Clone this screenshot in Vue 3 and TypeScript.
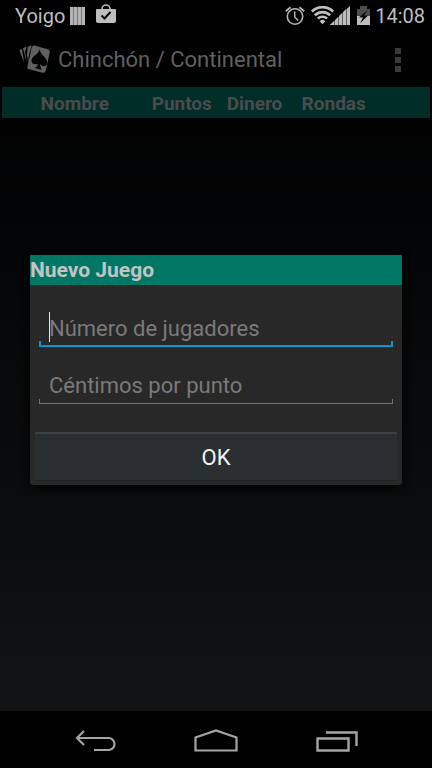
<script setup lang="ts">
import { ref } from 'vue'

const columns: string[] = ['Nombre', 'Puntos', 'Dinero', 'Rondas']
const players = ref('')
const cents = ref('')
</script>

<template>
  <div class="screen">
    <header class="status">
      <span class="carrier">Yoigo</span>
      <svg class="bars" width="16" height="18" viewBox="0 0 16 18" aria-hidden="true">
        <path d="M0 0h15v18H0z" fill="#777" />
        <path d="M0 0h3v18H0zM4 0h3v18H4zM8 0h3v18H8zM12 0h3v18h-3z" fill="#b4b4b4" />
      </svg>
      <svg class="bag" width="20" height="20" viewBox="0 0 20 20" aria-hidden="true">
        <path d="M6 6V4.500a4 3.500 0 0 1 8 0V6" fill="none" stroke="#bbb" stroke-width="1.500" />
        <path d="M1 5h18a1 1 0 0 1 1 1v11a2 2 0 0 1-2 2H2a2 2 0 0 1-2-2V6a1 1 0 0 1 1-1z" fill="#bebebe" />
        <path d="M5.500 11.500l3 3 6-6.500" fill="none" stroke="#080808" stroke-width="2" />
      </svg>
      <span class="spacer"></span>
      <svg class="alarm" width="20" height="20" viewBox="0 0 20 20" fill="none" stroke="#b5b5b5" aria-hidden="true">
        <circle cx="10" cy="10.500" r="7.700" stroke-width="1.600" />
        <path d="M9.700 5.500v5.500l3.500 3.500" stroke-width="1.500" />
        <path d="M.8 5.200L5.500 1.300M14.500 1.300L19.200 5.200" stroke-width="1.800" />
      </svg>
      <svg class="signal" width="40" height="20" viewBox="0 0 40 20" aria-hidden="true">
        <g fill="none" stroke="#c0c0c0" stroke-width="2.700">
          <path d="M.9 5.600a15 15 0 0 1 21.200 0" />
          <path d="M3.900 9.200a10.800 10.800 0 0 1 15.200 0" />
          <path d="M6.900 12.600a6.600 6.600 0 0 1 9.200 0" />
        </g>
        <path d="M8.700 15.200a4 4 0 0 1 5.600 0l-2.800 3z" fill="#c0c0c0" />
        <path d="M19 19L39 0v19z" fill="#626262" />
        <path d="M19 19l4-4v4zM24 14l3-3v8h-3zM28 10l3-3v12h-3zM32 6l3-3v16h-3zM36 3l3-3v19h-3z" fill="#bdbdbd" />
      </svg>
      <svg class="battery" width="13" height="20" viewBox="0 0 13 20" aria-hidden="true">
        <path d="M3 0h7v3h3v7H0V3h3z" fill="#4b4b4b" />
        <path d="M0 10h13v9H0z" fill="#bdbdbd" />
        <path d="M10.500 4L2 11.500h4L3 17.500l8-8H7z" fill="#080808" />
      </svg>
      <time class="clock">14:08</time>
    </header>

    <main class="content">
      <div class="appbar">
        <svg class="logo" width="32" height="30" viewBox="0 0 32 30" aria-hidden="true">
          <path d="M.3 5.200l2.700-1.200L5.200 17.500zM4 3.200l3.600-1.700L6 7l1.900 11.500zM8.800 1.700L12.700.3 9.400 12l.1 6.500-1.500-9z" fill="#606060" />
          <path d="M15.600.6l13 3.700q2.700.8 2.100 3.500l-4 18q-.7 2.600-3.200 1.900L10.200 24.300q-2.400-.7-1.700-3.100L12.700 2.500q.6-2.500 2.900-1.900z" fill="#606060" />
          <path d="M20.600 4.300c.8 5.700 8.700 9 7.500 14.300-.9 3.300-5.100 3.200-6.800.7 0 2.300.6 4.100 1.700 5.600l-7.300-1.900c1.800-.8 2.900-2.400 3.400-4.300-2.500 1.500-6.800.4-6.600-3.200.4-4.700 6.900-5.600 8.100-11.200z" fill="#050505" />
        </svg>
        <h1>Chinchón / Continental</h1>
        <button class="more" type="button" aria-label="Más opciones">
          <span></span><span></span><span></span>
        </button>
      </div>

      <table class="scores">
        <thead>
          <tr>
            <th v-for="name in columns" :key="name" scope="col">{{ name }}</th>
            <td></td>
          </tr>
        </thead>
      </table>

      <div class="overlay">
        <form class="dialog" role="dialog" aria-labelledby="dialog-title" @submit.prevent>
          <h2 id="dialog-title">Nuevo Juego</h2>
          <div class="fields">
            <div class="field active">
              <input v-model="players" type="text" inputmode="numeric" placeholder="Número de jugadores" aria-label="Número de jugadores" />
            </div>
            <div class="field">
              <input v-model="cents" type="text" inputmode="numeric" placeholder="Céntimos por punto" aria-label="Céntimos por punto" />
            </div>
          </div>
          <button class="ok" type="submit">OK</button>
        </form>
      </div>
    </main>

    <nav class="navbar">
      <button type="button" aria-label="Atrás">
        <svg width="42" height="24" viewBox="0 0 42 24" fill="none" stroke="#a5a5a5" stroke-width="2.200">
          <path d="M3 10h31.500a6 6 0 0 1 0 12H20" />
          <path d="M10 3L3 10l7 7" />
        </svg>
      </button>
      <button type="button" aria-label="Inicio">
        <svg width="44" height="24" viewBox="0 0 44 24" fill="none" stroke="#a5a5a5" stroke-width="2.200">
          <path d="M1.500 22.500V9.500L22 2.500l20.500 7v13z" />
        </svg>
      </button>
      <button type="button" aria-label="Recientes">
        <svg width="42" height="24" viewBox="0 0 42 24" fill="none" stroke="#a5a5a5">
          <path d="M1.500 10.500h31v12h-31z" stroke-width="2.400" />
          <path d="M10 4.500h30.500V18" stroke-width="2.400" />
        </svg>
      </button>
    </nav>
  </div>
</template>

<style>
body {
  background: #000;
}
</style>

<style scoped>
.screen {
  min-height: 100vh;
  display: flex;
  flex-direction: column;
  font-family: Roboto, "Noto Sans", sans-serif;
  background: #000;
}
button {
  border: 0;
  padding: 0;
  background: none;
  font-family: inherit;
}
h1,
h2 {
  margin: 0;
}
svg {
  display: block;
  flex: none;
}
.status {
  height: 32px;
  display: flex;
  align-items: center;
  padding: 0 7px 0 15px;
  color: #bebebe;
  font-size: 20px;
}
.bars {
  margin-left: 5px;
}
.bag {
  margin: 0 0 4px 10px;
}
.spacer {
  flex: 1;
}
.signal {
  margin-left: 6px;
}
.battery {
  margin-left: 6px;
}
.clock {
  margin-left: 5px;
}
.content {
  position: relative;
  flex: 1;
  background: linear-gradient(#000, #040506 30%, #0a0b0c 65%, #121315);
}
.appbar {
  height: 55px;
  display: flex;
  align-items: center;
  padding: 0 28px 0 19px;
}
h1 {
  flex: 1;
  margin-left: 7px;
  color: #606060;
  font-size: 22px;
  font-weight: 400;
}
.more {
  display: grid;
  gap: 3px;
  padding: 0 3px;
}
.more span {
  width: 6px;
  height: 6px;
  background: #3a3a3a;
}
.scores {
  width: calc(100% - 4px);
  margin: 0 2px;
  border-collapse: collapse;
  table-layout: fixed;
  background: #002d28;
  color: #4b4b4b;
  font-size: 19px;
}
.scores th,
.scores td {
  height: 30px;
  padding: 1px 0 0;
  font-weight: 700;
  text-align: center;
}
.scores th:nth-child(1) {
  width: 34%;
}
.scores th:nth-child(2) {
  width: 16%;
}
.scores th:nth-child(3) {
  width: 18%;
}
.scores th:nth-child(4) {
  width: 19%;
}
.overlay {
  position: absolute;
  inset: 0;
  display: flex;
  align-items: center;
  padding: 0 30px 3px;
}
.dialog {
  flex: 1;
  min-width: 0;
  border-radius: 0 0 3px 3px;
  background: #282828;
  box-shadow: 0 2px 10px #000;
}
h2 {
  background: #007665;
  color: #c3c3c3;
  font-size: 21px;
  font-weight: 700;
  line-height: 30px;
}
.fields {
  display: grid;
  gap: 15px;
  padding: 20px 9px 28px;
}
.field {
  --line: #6f6f6f;
  --weight: 1px;
  position: relative;
  box-sizing: border-box;
  height: 42px;
  border-bottom: var(--weight) solid var(--line);
  background:
    linear-gradient(var(--line), var(--line)) left bottom / var(--weight) 4px no-repeat,
    linear-gradient(var(--line), var(--line)) right bottom / var(--weight) 4px no-repeat;
}
.field.active {
  --line: #0c97cb;
  --weight: 2px;
}
.field.active::before {
  content: "";
  position: absolute;
  left: 10px;
  top: 7px;
  width: 1px;
  height: 30px;
  background: #e6e6e6;
}
.field input {
  display: block;
  box-sizing: border-box;
  width: 100%;
  height: 40px;
  padding: 7px 10px 0;
  border: 0;
  outline: 0;
  background: none;
  color: #fff;
  font-family: inherit;
  font-size: 22px;
}
.field input::placeholder {
  color: #7a7a7a;
  opacity: 1;
}
.ok {
  display: block;
  width: calc(100% - 10px);
  height: 49px;
  margin: 0 5px;
  border-top: 2px solid #3a4043;
  border-bottom: 1px solid #1f2224;
  border-radius: 1px;
  background: #292e31;
  color: #f4f4f4;
  font-size: 22px;
}
.dialog::after {
  content: "";
  display: block;
  height: 4px;
}
.navbar {
  height: 57px;
  display: flex;
  justify-content: center;
  align-items: center;
  gap: 78px;
}
</style>
